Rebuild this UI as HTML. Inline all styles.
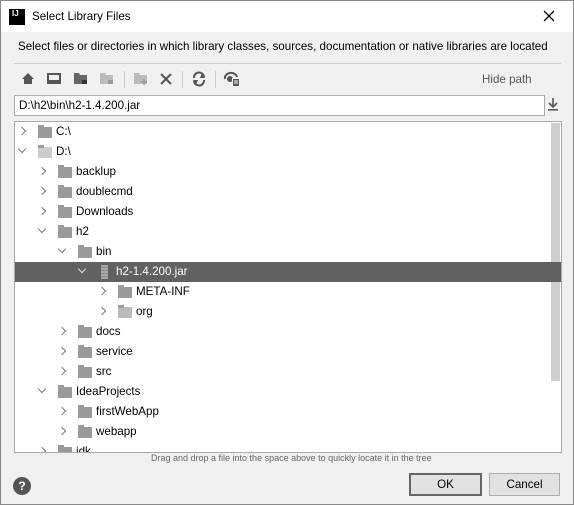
<!DOCTYPE html><html><head><style>
*{margin:0;padding:0;box-sizing:border-box}
body{width:574px;height:505px;background:#f0f0f0;font-family:"Liberation Sans",sans-serif;font-size:11.6px;color:#000;position:relative;overflow:hidden;border:1px solid #888}
.abs{position:absolute}
.row{position:absolute;left:1px;right:12px;height:20px;line-height:20px}
.chev{position:absolute;top:6px;width:6px;height:6px;border-right:1.5px solid #777;border-bottom:1.5px solid #777}
.r{transform:rotate(-45deg)}
.d{transform:rotate(45deg);top:4px}
.fold{position:absolute;top:5px;width:14px;height:11px;background:#9a9a9a}
.fold:before{content:"";position:absolute;left:0;top:-2px;width:6px;height:3px;background:#9a9a9a}
.t{position:absolute;top:0}
</style></head><body>
<div class="abs" style="left:0;top:0;width:572px;height:31px;background:#fff"></div>
<div class="abs" style="left:8px;top:8px;width:16px;height:16px;background:#000;color:#fff;font-size:8px;font-weight:bold;line-height:9px;padding-left:3px">IJ</div>
<div class="abs" style="left:31px;top:9px">Select Library Files</div>
<svg class="abs" style="left:542px;top:9px" width="12" height="12"><path d="M1 1L11 11M11 1L1 11" stroke="#000" stroke-width="1.3"/></svg>
<div class="abs" style="left:17px;top:39px">Select files or directories in which library classes, sources, documentation or native libraries are located</div>
<div class="abs" style="left:13px;top:62px;width:547px;height:1px;background:#ccc"></div>
<svg class="abs" style="left:0;top:68px" width="260" height="20">
<path d="M21 10L27 4L33 10H31V15H23V10Z" fill="#555"/>
<rect x="47" y="5" width="12" height="7" fill="none" stroke="#555" stroke-width="2"/><rect x="46" y="13" width="14" height="2" fill="#555"/>
<path d="M73 4H78L79 6H86V15H73Z" fill="#666"/><rect x="81" y="11" width="5" height="4" fill="#333"/>
<path d="M99 4H104L105 6H112V15H99Z" fill="#bbb"/><rect x="107" y="11" width="5" height="4" fill="#999"/>
<rect x="123" y="2" width="1" height="17" fill="#ccc"/>
<path d="M133 4H138L139 6H146V15H133Z" fill="#bbb"/><path d="M143 10V16M140 13H146" stroke="#999" stroke-width="1.5"/>
<path d="M160 5L170 15M170 5L160 15" stroke="#555" stroke-width="2"/>
<rect x="181" y="2" width="1" height="17" fill="#ccc"/>
<path d="M193 9A5 5 0 0 1 203 8M203 11A5 5 0 0 1 193 12" fill="none" stroke="#555" stroke-width="2"/><path d="M201 4L204 9L199 9Z M195 16L192 11L197 11Z" fill="#555"/>
<rect x="214" y="2" width="1" height="17" fill="#ccc"/>
<path d="M224 10A6 5 0 0 1 236 8" fill="none" stroke="#555" stroke-width="2"/><circle cx="229" cy="10" r="3" fill="#555"/><rect x="231" y="9" width="8" height="8" fill="#fff"/><rect x="232" y="10" width="6" height="7" fill="#555"/><path d="M233 12H237M233 14H237" stroke="#fff"/>
</svg>
<div class="abs" style="left:481px;top:72px;color:#555">Hide path</div>
<div class="abs" style="left:13px;top:94px;width:531px;height:21px;background:#fff;border:1px solid #aaa;padding:3px 4px">D:\h2\bin\h2-1.4.200.jar</div>
<svg class="abs" style="left:546px;top:96px" width="12" height="14"><path d="M6 1V9M2 6L6 10L10 6" fill="none" stroke="#555" stroke-width="1.6"/><rect x="1" y="12" width="10" height="1.6" fill="#555"/></svg>
<div class="abs" style="left:13px;top:120px;width:548px;height:332px;background:#fff;border:1px solid #aaa;overflow:hidden">
<div class="abs" style="right:1px;top:1px;width:9px;height:258px;background:#cdcdcd"></div>
<div class="row" style="top:0"><i class="chev r" style="left:3px"></i><i class="fold" style="left:22px"></i><span class="t" style="left:40px">C:\</span></div>
<div class="row" style="top:20px"><i class="chev d" style="left:3px"></i><i class="fold" style="left:22px;background:#ccc"></i><span class="t" style="left:40px">D:\</span></div>
<div class="row" style="top:40px"><i class="chev r" style="left:23px"></i><i class="fold" style="left:42px"></i><span class="t" style="left:60px">backlup</span></div>
<div class="row" style="top:60px"><i class="chev r" style="left:23px"></i><i class="fold" style="left:42px"></i><span class="t" style="left:60px">doublecmd</span></div>
<div class="row" style="top:80px"><i class="chev r" style="left:23px"></i><i class="fold" style="left:42px"></i><span class="t" style="left:60px">Downloads</span></div>
<div class="row" style="top:100px"><i class="chev d" style="left:23px"></i><i class="fold" style="left:42px"></i><span class="t" style="left:60px">h2</span></div>
<div class="row" style="top:120px"><i class="chev d" style="left:43px"></i><i class="fold" style="left:62px"></i><span class="t" style="left:80px">bin</span></div>
<div class="row" style="top:140px;left:0;right:0;background:#616161;color:#fff"><i class="chev d" style="left:64px;border-color:#ddd"></i><i class="abs" style="left:86px;top:3px;width:7px;height:14px;background:repeating-linear-gradient(#aaa 0 2px,#888 2px 3px)"></i><span class="t" style="left:101px">h2-1.4.200.jar</span></div>
<div class="row" style="top:160px"><i class="chev r" style="left:83px"></i><i class="fold" style="left:102px"></i><span class="t" style="left:120px">META-INF</span></div>
<div class="row" style="top:180px"><i class="chev r" style="left:83px"></i><i class="fold" style="left:102px;background:#bbb"></i><span class="t" style="left:120px">org</span></div>
<div class="row" style="top:200px"><i class="chev r" style="left:43px"></i><i class="fold" style="left:62px"></i><span class="t" style="left:80px">docs</span></div>
<div class="row" style="top:220px"><i class="chev r" style="left:43px"></i><i class="fold" style="left:62px"></i><span class="t" style="left:80px">service</span></div>
<div class="row" style="top:240px"><i class="chev r" style="left:43px"></i><i class="fold" style="left:62px"></i><span class="t" style="left:80px">src</span></div>
<div class="row" style="top:260px"><i class="chev d" style="left:23px"></i><i class="fold" style="left:42px"></i><span class="t" style="left:60px">IdeaProjects</span></div>
<div class="row" style="top:280px"><i class="chev r" style="left:43px"></i><i class="fold" style="left:62px"></i><span class="t" style="left:80px">firstWebApp</span></div>
<div class="row" style="top:300px"><i class="chev r" style="left:43px"></i><i class="fold" style="left:62px"></i><span class="t" style="left:80px">webapp</span></div>
<div class="row" style="top:320px"><i class="chev r" style="left:23px"></i><i class="fold" style="left:42px"></i><span class="t" style="left:60px">jdk</span></div>
</div>
<div class="abs" style="left:150px;top:452px;font-size:9px;color:#666">Drag and drop a file into the space above to quickly locate it in the tree</div>
<div class="abs" style="left:12px;top:476px;width:18px;height:18px;border-radius:50%;background:#555;color:#fff;font-weight:bold;text-align:center;line-height:18px;font-size:12px">?</div>
<div class="abs" style="left:408px;top:472px;width:73px;height:23px;background:#e1e1e1;border:2px solid #666;text-align:center;line-height:19px">OK</div>
<div class="abs" style="left:488px;top:472px;width:71px;height:23px;background:#e1e1e1;border:1px solid #adadad;text-align:center;line-height:21px">Cancel</div>
</body></html>
